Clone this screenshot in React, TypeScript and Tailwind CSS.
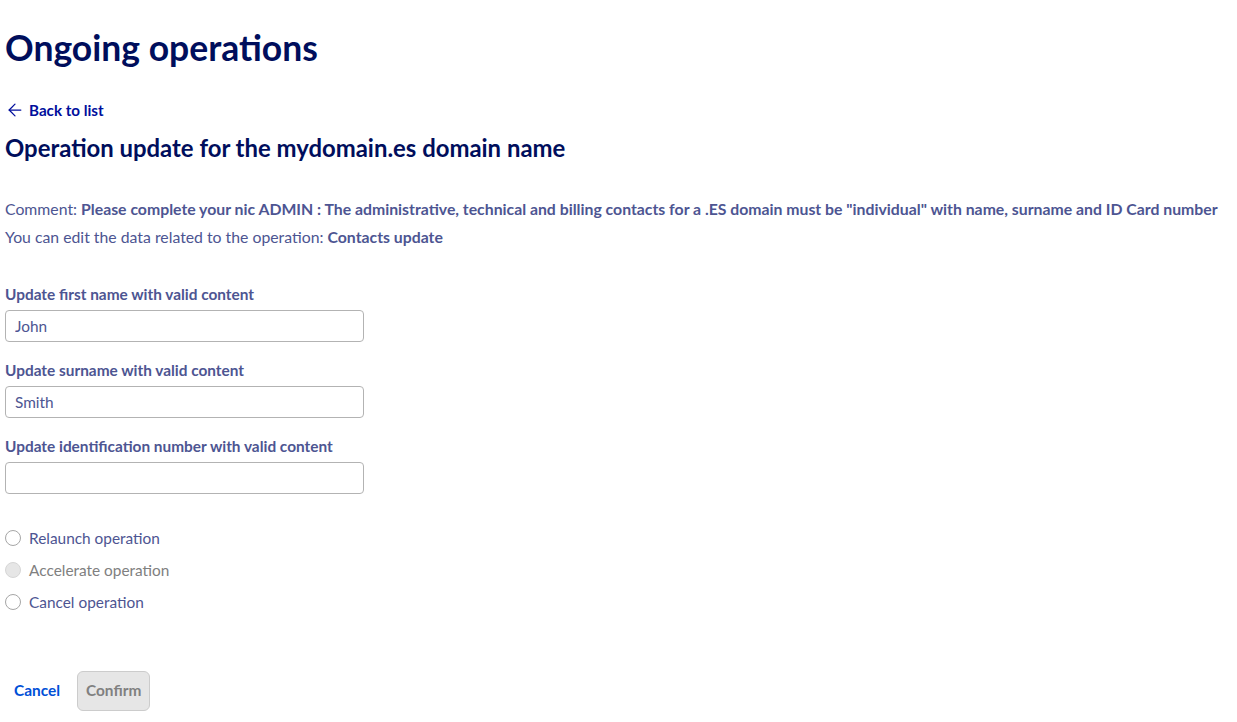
import { ArrowLeft } from 'lucide-react'

const fields = [
	{ label: 'Update first name with valid content', value: 'John' },
	{ label: 'Update surname with valid content', value: 'Smith' },
	{ label: 'Update identification number with valid content', value: '' },
]

const actions = [
	{ label: 'Relaunch operation', disabled: false },
	{ label: 'Accelerate operation', disabled: true },
	{ label: 'Cancel operation', disabled: false },
]

export default function App() {
	return (
		<div
			className="min-h-screen bg-white px-[5px] text-[#4d5592]"
			style={{ fontFamily: 'Lato, "Open Sans", sans-serif' }}
		>
			<h1 className="pt-[28px] text-[35.5px] font-bold leading-[40px] text-[#000e5c]">
				Ongoing operations
			</h1>
			<a
				href="#"
				className="mt-[32px] flex items-center gap-[4px] text-[15.2px] font-bold leading-[20px] text-[#000e9c]"
			>
				<ArrowLeft className="h-5 w-5" strokeWidth={1.5} />
				Back to list
			</a>
			<h2 className="mt-[14px] text-[23.9px] font-bold leading-[28px] text-[#000e5c]">
				Operation update for the mydomain.es domain name
			</h2>

			<div className="mt-[37px] flex flex-col gap-[8px] text-[15.8px] leading-[20px]">
				<p>
					Comment:{' '}
					<strong className="font-bold">
						Please complete your nic ADMIN : The administrative, technical and
						billing contacts for a .ES domain must be "individual" with name,
						surname and ID Card number
					</strong>
				</p>
				<p>
					You can edit the data related to the operation:{' '}
					<strong className="font-bold">Contacts update</strong>
				</p>
			</div>

			<div className="mt-[37px] flex flex-col gap-[18px]">
				{fields.map((f) => (
					<div key={f.label} className="flex flex-col gap-[6px]">
						<label className="text-[15.4px] font-bold leading-[20px]">
							{f.label}
						</label>
						<input
							defaultValue={f.value}
							className="h-[32px] w-[359px] rounded-[4px] border border-[#b3b3b3] px-[9px] text-[15.4px] text-[#4d5592] outline-none"
						/>
					</div>
				))}
			</div>

			<div className="mt-[34px] flex flex-col gap-[12px]">
				{actions.map((a) => (
					<label
						key={a.label}
						className={`flex items-center gap-[8px] text-[15.4px] leading-[20px] ${
							a.disabled ? 'text-[#808080]' : ''
						}`}
					>
						<span
							className={`h-[16px] w-[16px] rounded-full border ${
								a.disabled
									? 'border-[#d6d6d6] bg-[#e6e6e6]'
									: 'border-[#a6a6a6] bg-white'
							}`}
						/>
						{a.label}
					</label>
				))}
			</div>

			<div className="mt-[59px] flex items-center gap-[17px] pl-[9px]">
				<button className="text-[15.4px] font-bold text-[#0050d7]">Cancel</button>
				<button
					disabled
					className="h-[40px] rounded-[6px] border border-[#cccccc] bg-[#e6e6e6] px-[8px] text-[15.4px] font-bold text-[#808080]"
				>
					Confirm
				</button>
			</div>
		</div>
	)
}
